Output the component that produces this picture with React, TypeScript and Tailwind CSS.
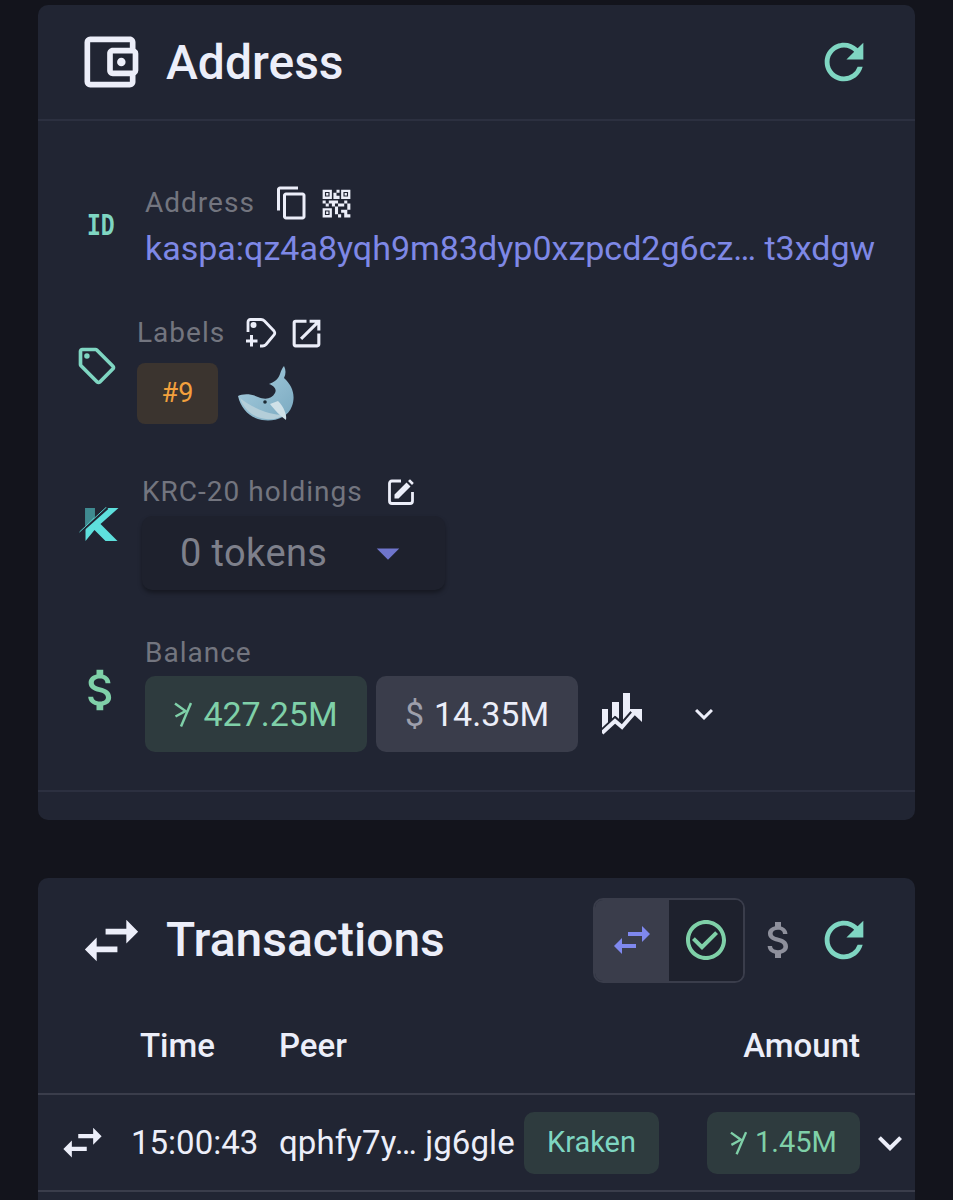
import React from "react";
import {
  MdOutlineAccountBalanceWallet,
  MdRefresh,
  MdContentCopy,
  MdQrCode2,
  MdOutlineSell,
  MdOpenInNew,
  MdArrowDropDown,
  MdAttachMoney,
  MdExpandMore,
  MdSwapHoriz,
  MdCheckCircleOutline,
} from "react-icons/md";

function KaspaMark({ className }: { className: string }) {
  return (
    <svg viewBox="0 0 18 25" className={className} fill="none" stroke="currentColor" strokeWidth="2.5">
      <path d="M17 1 L7 24.5" />
      <path d="M1 1.5 L11.5 9 L1.5 14.5" />
    </svg>
  );
}

function TagPlus({ className }: { className: string }) {
  return (
    <svg viewBox="0 0 32 32" className={className} fill="none" stroke="currentColor" strokeWidth="2.8">
      <path d="M3 15 V5 Q3 2.5 5.5 2.5 H16 Q18 2.5 19.5 4 L29 14 Q30.5 16 29 18 L21 27.5 Q19.5 29 17.5 29 H15" />
      <circle cx="8.5" cy="8" r="1.6" fill="currentColor" />
      <path d="M6.5 18 V29.5 M1 24 H12.5" strokeWidth="3" />
    </svg>
  );
}

function EditBox({ className }: { className: string }) {
  return (
    <svg viewBox="0 0 28 28" className={className} fill="none">
      <path d="M14 3 H5 Q2.5 3 2.5 5.5 V23 Q2.5 25.5 5 25.5 H23 Q25.5 25.5 25.5 23 V14" stroke="currentColor" strokeWidth="2.8" />
      <path d="M7.5 20.5 V16.5 L19.5 4.5 L23.5 8.5 L11.5 20.5 Z M21 3 L23 1.2 L26.8 5 L25 7 Z" fill="currentColor" />
    </svg>
  );
}

function ChartTrend({ className }: { className: string }) {
  return (
    <svg viewBox="0 0 42 42" className={className}>
      <path d="M0 16 H6 V38 H0 Z M10 9 H17 V26 L13.5 23 L10 26 Z M21 0 H28 V30 H21 Z" fill="currentColor" />
      <path d="M-2 42 L13 28 L20 34 L34 18" fill="none" stroke="#212533" strokeWidth="8" />
      <path d="M0 40 L13 28 L20 34 L33 19" fill="none" stroke="currentColor" strokeWidth="4" />
      <path d="M26 16 H40 V29 Z" fill="currentColor" />
    </svg>
  );
}

function KrcLogo({ className }: { className: string }) {
  return (
    <svg viewBox="0 0 40 36" className={className}>
      <path d="M6 1 H15 V12 L27 1 H39 L21 17 L38 34 H26 L15 23 L6 34 Z" fill="#5ee0dd" />
      <path d="M6 1 H15 V10 L6 19 Z" fill="#3f8a90" />
      <path d="M1 25 L28 1" stroke="#212533" strokeWidth="2.4" />
      <path d="M0 25 L27 0" stroke="#5ee0dd" strokeWidth="0.9" />
    </svg>
  );
}

function Whale({ className }: { className: string }) {
  return (
    <svg viewBox="0 0 58 58" className={className}>
      <defs>
        <linearGradient id="whaleBody" x1="0" y1="0" x2="1" y2="1">
          <stop offset="0" stopColor="#a9cfe0" />
          <stop offset="1" stopColor="#7aa9c0" />
        </linearGradient>
      </defs>
      <path d="M46 1 C48 5 48 9 46 13 C54 20 58 30 54 41 C50 53 36 57 24 55 C12 53 3 44 0 31 C4 29 12 28 20 32 C27 35 34 34 37 28 C39 24 36 21 31 19 C36 17 40 15 42 9 C43 6 44 3 46 1 Z" fill="url(#whaleBody)" />
      <path d="M2 33 C6 45 16 53 28 54 C36 55 42 53 46 50 C36 50 26 47 18 43 C11 40 6 36 2 33 Z" fill="#b4ced9" />
      <path d="M32 39 C36 44 42 51 48 55 C49 50 46 42 40 36 Z" fill="#d0e1e8" />
      <circle cx="27" cy="37" r="1.8" fill="#1d2b36" />
    </svg>
  );
}

export default function App() {
  return (
    <div className="h-[1200px] overflow-hidden bg-[#13141c] px-[38px] pt-[5px] font-['Roboto',sans-serif] text-[#e8eaf6]">
      <section className="h-[815px] rounded-[10px] bg-[#212533]">
        <header className="flex h-[116px] items-center justify-between border-b-2 border-[#2c3040] pl-[38px] pr-[42px]">
          <div className="flex items-center gap-[22px]">
            <MdOutlineAccountBalanceWallet className="h-[68px] w-[68px] text-[#eceef9]" />
            <h2 className="translate-y-[1px] text-[48px] font-medium leading-none text-[#eceef9]">Address</h2>
          </div>
          <MdRefresh className="h-[58px] w-[58px] text-[#7fd6c2]" />
        </header>

        <div className="border-b-2 border-[#2c3040] pb-[38px]">
          <div className="flex items-start pl-[49px] pt-[64px]">
            <span className="mt-[27px] w-[58px] origin-center scale-y-[1.4] font-['Liberation_Mono',monospace] text-[23px] font-bold leading-[30px] text-[#7fd6c2]">ID</span>
            <div>
              <div className="flex h-[36px] items-center">
                <span className="text-[28px] leading-none tracking-[1px] text-[#73757f]">Address</span>
                <MdContentCopy className="ml-[19px] h-[36px] w-[36px] text-[#eceef9]" />
                <MdQrCode2 className="ml-[8px] h-[37px] w-[37px] text-[#eceef9]" />
              </div>
              <div className="mt-[7px] whitespace-nowrap text-[34px] leading-[40px] text-[#7e88e6]">kaspa:qz4a8yqh9m83dyp0xzpcd2g6cz… t3xdgw</div>
            </div>
          </div>

          <div className="flex items-start pl-[37px] pt-[47px]">
            <MdOutlineSell className="mt-[29px] h-[44px] w-[44px] text-[#7fd6c2]" />
            <div className="ml-[18px]">
              <div className="flex h-[36px] items-center">
                <span className="text-[28px] leading-none tracking-[1px] text-[#73757f]">Labels</span>
                <TagPlus className="ml-[20px] h-[32px] w-[32px] text-[#eceef9]" />
                <MdOpenInNew className="ml-[11px] h-[37px] w-[37px] text-[#eceef9]" />
              </div>
              <div className="mt-[9px] flex items-center pt-[3px]">
                <span className="flex h-[61px] w-[81px] items-center justify-center rounded-[8px] bg-[#3b342f] text-[27px] text-[#f2a03d]">#9</span>
                <Whale className="ml-[20px] h-[58px] w-[58px]" />
              </div>
            </div>
          </div>

          <div className="flex items-start pl-[41px] pt-[50px]">
            <KrcLogo className="mt-[33px] h-[36px] w-[41px]" />
            <div className="ml-[22px]">
              <div className="flex h-[36px] items-center">
                <span className="text-[28px] leading-none tracking-[1px] text-[#73757f]">KRC-20 holdings</span>
                <EditBox className="ml-[24px] h-[28px] w-[28px] text-[#eceef9]" />
              </div>
              <div className="mt-[6px] flex h-[74px] w-[303px] items-center justify-between rounded-[10px] bg-[#1e212d] pl-[38px] pr-[32px] shadow-[0_3px_4px_rgba(0,0,0,0.35)]">
                <span className="text-[38px] leading-none tracking-[0.4px] text-[#7e808b]">0 tokens</span>
                <MdArrowDropDown className="h-[54px] w-[54px] -mr-[2px] text-[#6f75cc]" />
              </div>
            </div>
          </div>

          <div className="flex items-start pl-[42px] pt-[47px]">
            <MdAttachMoney className="mt-[26px] -ml-[6px] h-[54px] w-[54px] text-[#7fd0a8]" />
            <div className="ml-[17px]">
              <div className="flex h-[31px] items-center">
                <span className="text-[28px] leading-none tracking-[1px] text-[#73757f]">Balance</span>
              </div>
              <div className="mt-[8px] flex items-center">
                <span className="flex h-[76px] w-[222px] items-center justify-center gap-[11px] rounded-[10px] bg-[#2e3b3e] text-[34px] text-[#7fd0a8]">
                  <KaspaMark className="h-[25px] w-[18px]" />
                  427.25M
                </span>
                <span className="ml-[9px] flex h-[76px] w-[202px] items-center justify-center gap-[10px] rounded-[10px] bg-[#3a3d4b] text-[34px] text-[#eceef9]">
                  <span className="text-[#9d9fab]">$</span>
                  14.35M
                </span>
                <ChartTrend className="ml-[24px] h-[42px] w-[42px] text-[#eceef9]" />
                <MdExpandMore className="ml-[42px] h-[36px] w-[36px] text-[#eceef9]" />
              </div>
            </div>
          </div>
        </div>
      </section>

      <section className="mt-[58px] rounded-[10px] bg-[#212533]">
        <header className="flex h-[124px] items-center justify-between pl-[38px] pr-[42px]">
          <div className="flex items-center gap-[19px]">
            <MdSwapHoriz className="h-[71px] w-[71px] text-[#eceef9]" />
            <h2 className="text-[48px] font-medium leading-none text-[#eceef9]">Transactions</h2>
          </div>
          <div className="flex items-center">
            <div className="flex h-[85px] w-[152px] overflow-hidden rounded-[10px] border-2 border-[#3a3d4b]">
              <div className="flex w-[74px] items-center justify-center bg-[#3a3d4b]">
                <MdSwapHoriz className="h-[48px] w-[48px] text-[#7f88ee]" />
              </div>
              <div className="flex flex-1 items-center justify-center bg-[#1e212d]">
                <MdCheckCircleOutline className="h-[48px] w-[48px] text-[#7fd0a8]" />
              </div>
            </div>
            <MdAttachMoney className="ml-[10px] h-[48px] w-[48px] text-[#8e909c]" />
            <MdRefresh className="ml-[12px] h-[58px] w-[58px] text-[#7fd6c2]" />
          </div>
        </header>

        <div className="flex h-[93px] items-center border-b-2 border-[#3a3d4b] pb-[4px] text-[33px] font-medium text-[#eceef9]">
          <span className="ml-[102px] w-[139px]">Time</span>
          <span>Peer</span>
          <span className="ml-auto mr-[55px]">Amount</span>
        </div>

        <div className="flex h-[97px] items-center border-b-2 border-[#3a3d4b] text-[#eceef9]">
          <MdSwapHoriz className="ml-[19px] h-[51px] w-[51px] shrink-0" />
          <span className="ml-[23px] w-[148px] shrink-0 text-[33px]">15:00:43</span>
          <span className="w-[245px] shrink-0 whitespace-nowrap text-[33px] tracking-[0.1px]">qphfy7y… jg6gle</span>
          <span className="flex h-[62px] w-[135px] shrink-0 items-center justify-center rounded-[10px] bg-[#2e3b3e] text-[29px] text-[#7fd6c2]">Kraken</span>
          <span className="ml-[48px] flex h-[62px] w-[153px] shrink-0 items-center justify-center gap-[8px] rounded-[10px] bg-[#2e3b3e] text-[29px] text-[#7fd0a8]">
            <KaspaMark className="h-[24px] w-[17px]" />
            1.45M
          </span>
          <MdExpandMore className="ml-[6px] h-[48px] w-[48px] shrink-0" />
        </div>
        <div className="h-[40px]" />
      </section>
    </div>
  );
}
